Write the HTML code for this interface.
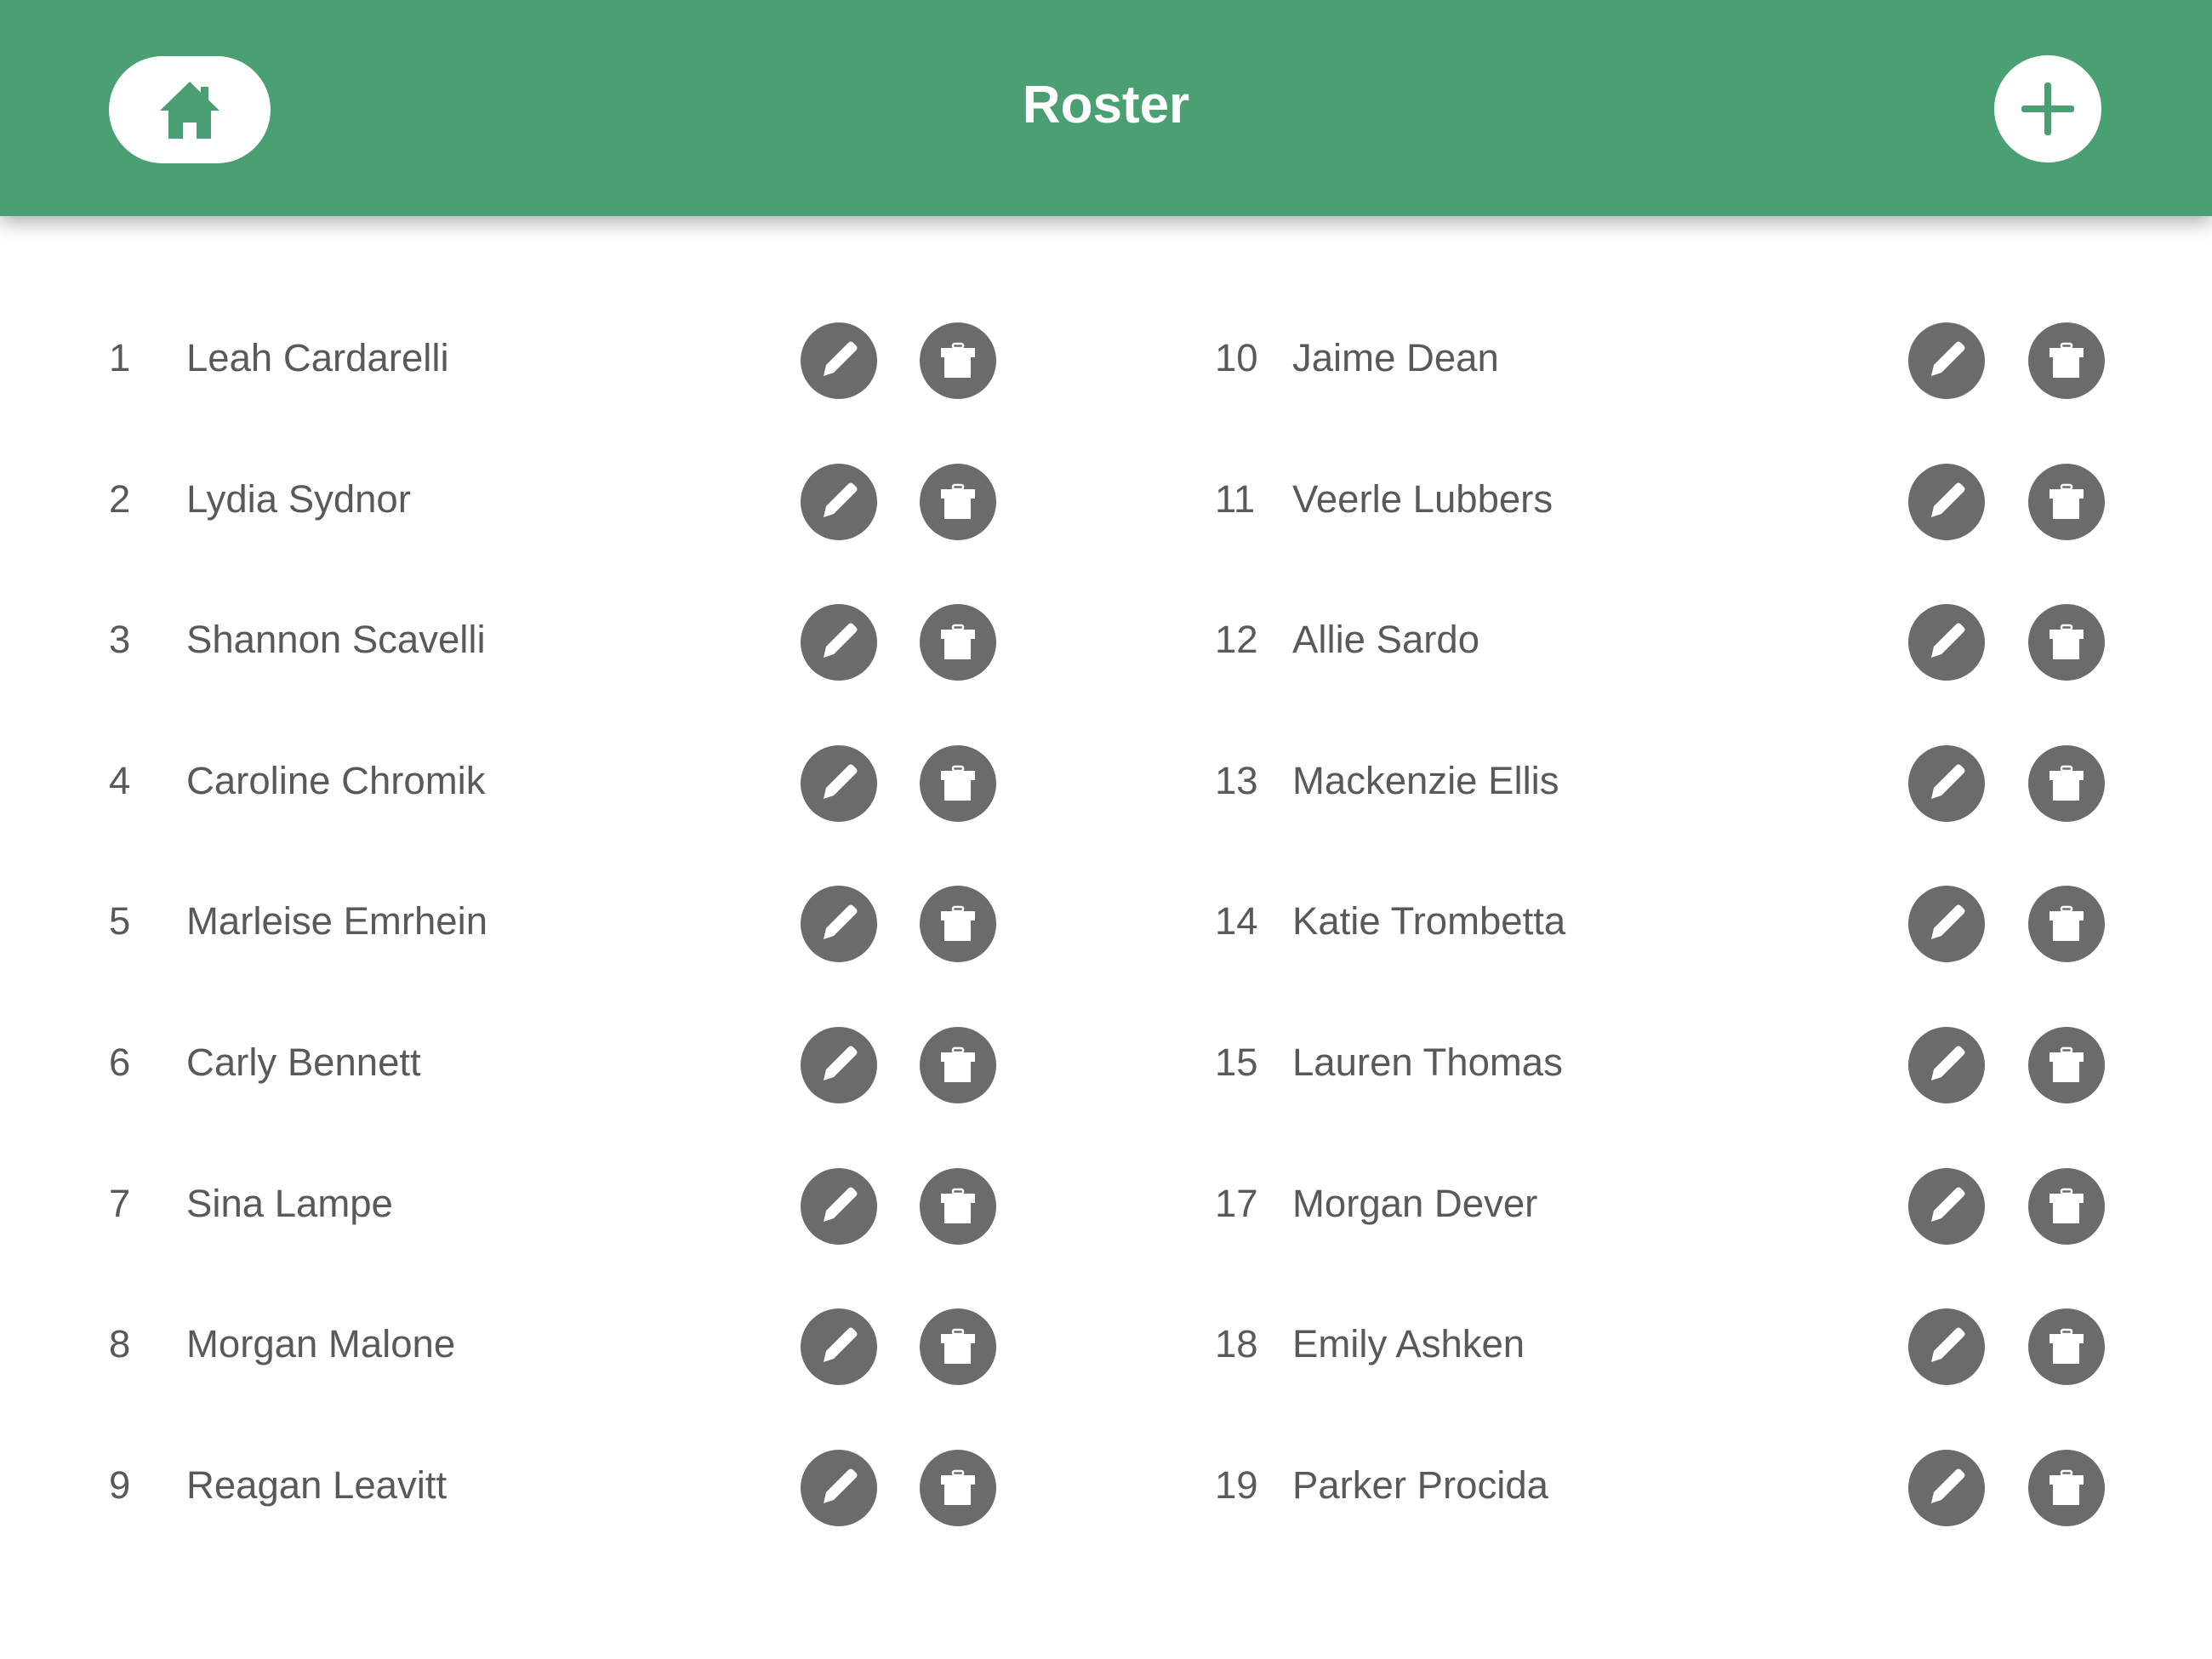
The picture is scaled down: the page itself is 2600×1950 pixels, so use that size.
<!DOCTYPE html>
<html><head><meta charset="utf-8"><style>
body{margin:0;width:2600px;height:1950px;background:#fff;font-family:"Liberation Sans",Helvetica,Arial,sans-serif;position:relative;overflow:hidden}
.hdr{position:absolute;left:0;top:0;width:2600px;height:254px;background:#4a9f73;box-shadow:0 6px 22px rgba(0,0,0,.35)}
.title{position:absolute;left:0;width:2600px;top:88px;text-align:center;color:#fff;font-weight:bold;font-size:62px}
.home{position:absolute;left:128px;top:66px;width:190px;height:126px;border-radius:63px;background:#fff}
.plus{position:absolute;left:2344px;top:65px;width:126px;height:126px;border-radius:50%;background:#fff}
.num,.name{position:absolute;font-size:45.5px;color:#595959;line-height:1}
.ic{position:absolute;width:90px;height:90px}
</style></head><body>
<div class="hdr">
<div class="home"><svg width="190" height="126" viewBox="0 0 190 126"><path d="M95 30 L130 64 L120 64 L120 97 L103 97 L103 78 L87 78 L87 97 L70 97 L70 64 L60 64 Z" fill="#4a9f73"/><rect x="108" y="36" width="9" height="16" fill="#4a9f73"/></svg></div>
<div class="title">Roster</div>
<div class="plus"><svg width="126" height="126"><rect x="59" y="32" width="8" height="62" rx="3" fill="#4a9f73"/><rect x="32" y="59" width="62" height="8" rx="3" fill="#4a9f73"/></svg></div>
</div>
<div id="rows"></div>
<script>
const L=["Leah Cardarelli","Lydia Sydnor","Shannon Scavelli","Caroline Chromik","Marleise Emrhein","Carly Bennett","Sina Lampe","Morgan Malone","Reagan Leavitt"];
const LN=[1,2,3,4,5,6,7,8,9];
const R=["Jaime Dean","Veerle Lubbers","Allie Sardo","Mackenzie Ellis","Katie Trombetta","Lauren Thomas","Morgan Dever","Emily Ashken","Parker Procida"];
const RN=[10,11,12,13,14,15,17,18,19];
const pen='<svg class="ic" viewBox="0 0 90 90" style="left:XPX;top:YPX"><circle cx="45" cy="45" r="45" fill="#6b6b6b"/><path d="M27 63 L30 50 L56 24 Q59 21 62 24 L65 27 Q68 30 65 33 L39 59 Z" fill="#fff"/></svg>';
const bin='<svg class="ic" viewBox="0 0 90 90" style="left:XPX;top:YPX"><circle cx="45" cy="45" r="45" fill="#6b6b6b"/><rect x="25" y="30" width="40" height="11" fill="#fff"/><rect x="29" y="41" width="31" height="24" fill="#fff"/><rect x="39" y="25" width="12" height="5" rx="2" fill="none" stroke="#fff" stroke-width="2.5"/></svg>';
let h='';
for(let i=0;i<9;i++){
 const cy=424+i*165.6;
 const t=cy-26;
 h+=`<div class="num" style="left:128px;top:${t}px">${LN[i]}</div><div class="name" style="left:219px;top:${t}px">${L[i]}</div>`;
 h+=`<div class="num" style="left:1428px;top:${t}px">${RN[i]}</div><div class="name" style="left:1519px;top:${t}px">${R[i]}</div>`;
 [[986,pen],[1126,bin],[2288,pen],[2429,bin]].forEach(([x,s])=>{h+=s.replace('X',x-45).replace('Y',cy-45)});
}
document.getElementById('rows').innerHTML=h;
</script>
</body></html>
